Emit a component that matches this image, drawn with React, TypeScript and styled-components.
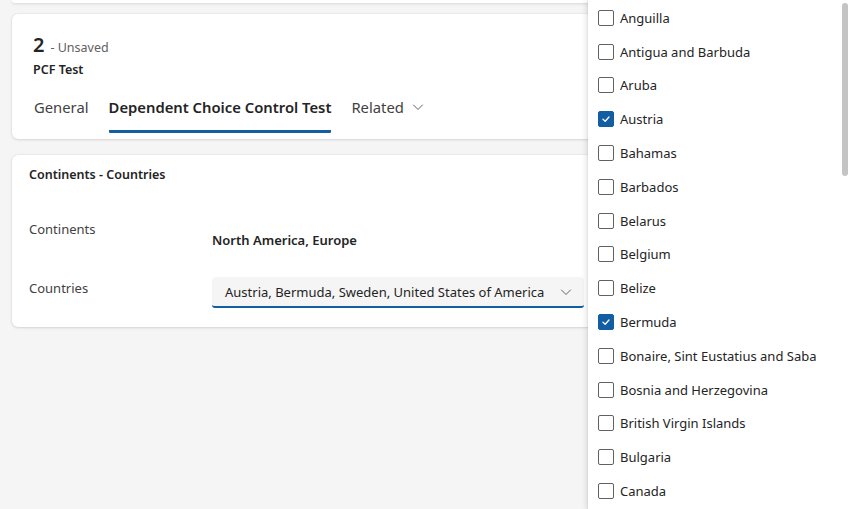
import React from 'react';
import styled, { createGlobalStyle } from 'styled-components';

const GlobalStyle = createGlobalStyle`
  html, body {
    margin: 0;
    padding: 0;
    background: #f5f5f5;
    font-family: "Noto Sans", "Open Sans", sans-serif;
    color: #242424;
  }
  #root {
    min-height: 509px;
  }
`;

const Page = styled.div`
  position: relative;
  width: 850px;
  height: 509px;
  overflow: hidden;
`;

const Main = styled.div`
  display: flex;
  flex-direction: column;
  gap: 16px;
  padding: 0 12px;
`;

const PrevCardEdge = styled.div`
  height: 3px;
  background: #fff;
  border-radius: 0 0 6px 6px;
  box-shadow: 0 1px 3px rgba(0, 0, 0, 0.12);
  margin-bottom: -5px;
`;

const Card = styled.div`
  background: #fff;
  border-radius: 6px;
  box-shadow: 0 0 2px rgba(0, 0, 0, 0.12), 0 1px 3px rgba(0, 0, 0, 0.1);
`;

const HeaderCard = styled(Card)`
  padding: 20px 21px 6px;
`;

const TitleLine = styled.div`
  display: flex;
  align-items: baseline;
  gap: 6px;
  height: 24px;
  line-height: 22px;
`;

const RecordNumber = styled.span`
  font-size: 20px;
  font-weight: 600;
  color: #242424;
`;

const SaveState = styled.span`
  font-size: 12.5px;
  color: #616161;
`;

const EntityName = styled.div`
  margin-top: 4px;
  font-size: 12.5px;
  line-height: 16px;
  font-weight: 600;
  color: #242424;
`;

const TabList = styled.div`
  display: flex;
  gap: 20px;
  margin-top: 8px;
  padding-left: 1px;
`;

const Tab = styled.div<{ $active?: boolean }>`
  display: flex;
  align-items: center;
  gap: 8px;
  padding: 11px 0 13px;
  line-height: 20px;
  font-size: 14.8px;
  font-weight: ${p => (p.$active ? 600 : 400)};
  color: ${p => (p.$active ? '#242424' : '#424242')};
  border-bottom: 3px solid ${p => (p.$active ? '#115ea3' : 'transparent')};
  border-radius: 1px;
`;

const SectionCard = styled(Card)`
  padding: 12px 17px 19px;
`;

const SectionTitle = styled.div`
  font-size: 12.5px;
  line-height: 16px;
  font-weight: 600;
  color: #242424;
  margin-bottom: 30px;
`;

const FieldRow = styled.div<{ $height: number }>`
  display: grid;
  grid-template-columns: 183px 372px;
  min-height: ${p => p.$height}px;
`;

const FieldLabel = styled.div`
  padding-top: 8px;
  font-size: 13px;
  line-height: 16px;
  color: #424242;
`;

const ReadValue = styled.div`
  padding-top: 19px;
  font-size: 13px;
  line-height: 16px;
  font-weight: 600;
  color: #242424;
`;

const SelectBox = styled.div`
  margin-top: 5px;
  height: 29px;
  display: flex;
  align-items: center;
  justify-content: space-between;
  padding: 0 12px 0 13px;
  background: #f5f5f5;
  border-bottom: 2px solid #115ea3;
  border-radius: 4px 4px 3px 3px;
  font-size: 13px;
  color: #242424;
`;

const Chevron = styled.svg`
  flex: none;
  color: #616161;
`;

const Panel = styled.div`
  position: absolute;
  top: 0;
  left: 588px;
  width: 262px;
  height: 509px;
  background: #fff;
  box-shadow: -2px 0 6px rgba(0, 0, 0, 0.1), 0 0 2px rgba(0, 0, 0, 0.12);
  padding-top: 1px;
`;

const ScrollThumb = styled.div`
  position: absolute;
  top: 3px;
  right: 2px;
  width: 6px;
  height: 173px;
  border-radius: 3px;
  background: #c4c4c4;
`;

const Option = styled.div`
  display: flex;
  align-items: center;
  gap: 6px;
  height: 33.8px;
  padding-left: 10px;
  font-size: 13px;
  color: #242424;
`;

const Box = styled.span<{ $checked?: boolean }>`
  box-sizing: border-box;
  width: 16px;
  height: 16px;
  flex: none;
  display: flex;
  align-items: center;
  justify-content: center;
  border-radius: 2px;
  border: 1px solid ${p => (p.$checked ? '#115ea3' : '#616161')};
  background: ${p => (p.$checked ? '#115ea3' : '#fff')};
`;

const ChevronDown = ({ size = 12 }: { size?: number }) => (
  <Chevron width={size} height={size} viewBox="0 0 12 12" fill="none">
    <path d="M1.5 4 L6 8.5 L10.5 4" stroke="currentColor" strokeWidth="1" strokeLinecap="round" strokeLinejoin="round" />
  </Chevron>
);

const countries = [
  { name: 'Anguilla', checked: false },
  { name: 'Antigua and Barbuda', checked: false },
  { name: 'Aruba', checked: false },
  { name: 'Austria', checked: true },
  { name: 'Bahamas', checked: false },
  { name: 'Barbados', checked: false },
  { name: 'Belarus', checked: false },
  { name: 'Belgium', checked: false },
  { name: 'Belize', checked: false },
  { name: 'Bermuda', checked: true },
  { name: 'Bonaire, Sint Eustatius and Saba', checked: false },
  { name: 'Bosnia and Herzegovina', checked: false },
  { name: 'British Virgin Islands', checked: false },
  { name: 'Bulgaria', checked: false },
  { name: 'Canada', checked: false },
];

const App: React.FC = () => {
  return (
    <Page>
      <GlobalStyle />
      <Main>
        <PrevCardEdge />
        <HeaderCard>
          <TitleLine>
            <RecordNumber>2</RecordNumber>
            <SaveState>- Unsaved</SaveState>
          </TitleLine>
          <EntityName>PCF Test</EntityName>
          <TabList>
            <Tab>General</Tab>
            <Tab $active>Dependent Choice Control Test</Tab>
            <Tab>
              Related
              <ChevronDown />
            </Tab>
          </TabList>
        </HeaderCard>

        <SectionCard>
          <SectionTitle>Continents - Countries</SectionTitle>
          <FieldRow $height={59}>
            <FieldLabel>Continents</FieldLabel>
            <ReadValue>North America, Europe</ReadValue>
          </FieldRow>
          <FieldRow $height={36}>
            <FieldLabel>Countries</FieldLabel>
            <SelectBox>
              Austria, Bermuda, Sweden, United States of America
              <ChevronDown />
            </SelectBox>
          </FieldRow>
        </SectionCard>
      </Main>

      <Panel>
        {countries.map(c => (
          <Option key={c.name}>
            <Box $checked={c.checked}>
              {c.checked && (
                <svg width="10" height="10" viewBox="0 0 10 10" fill="none">
                  <path d="M2 5.2 L4.2 7.2 L8 3" stroke="#fff" strokeWidth="1.3" strokeLinecap="round" strokeLinejoin="round" />
                </svg>
              )}
            </Box>
            {c.name}
          </Option>
        ))}
        <ScrollThumb />
      </Panel>
    </Page>
  );
};

export default App;
